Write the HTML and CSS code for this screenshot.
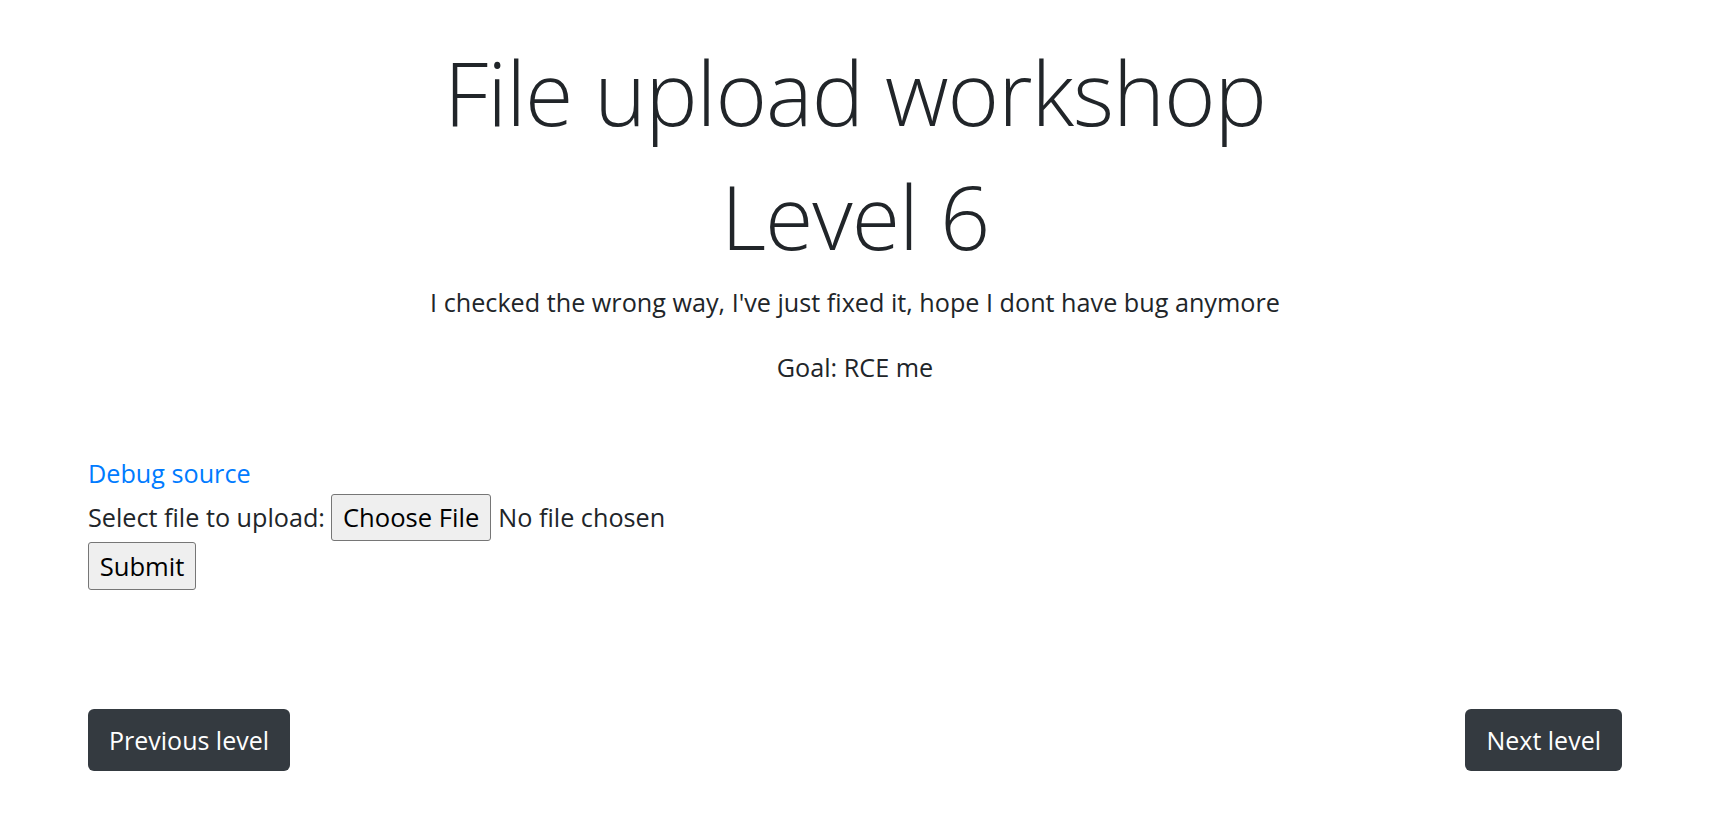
FILE: index.html
```html
<!DOCTYPE html>
<html lang="en">
<head>
<meta charset="utf-8">
<title>File upload workshop - Level 6</title>
<link rel="stylesheet" href="styles.css">
</head>
<body>
<div class="page">
  <header class="hero">
    <h1 class="title">File upload workshop</h1>
    <h1 class="title title-level">Level 6</h1>
    <p class="lead-text">I checked the wrong way, I've just fixed it, hope I dont have bug anymore</p>
    <p class="lead-text">Goal: RCE me</p>
  </header>

  <section class="upload">
    <a class="debug-link" href="#">Debug source</a>
    <form class="upload-form" action="#" method="post" enctype="multipart/form-data">
      <div class="file-row">
        <span class="file-label">Select file to upload:</span>
        <span class="file-button">Choose File</span>
        <span class="file-status">No file chosen</span>
      </div>
      <button class="submit-button" type="button">Submit</button>
    </form>
  </section>

  <nav class="pager">
    <a class="btn-dark" href="#">Previous level</a>
    <a class="btn-dark" href="#">Next level</a>
  </nav>
</div>
</body>
</html>
```

FILE: styles.css
```css
html, body {
  margin: 0;
  padding: 0;
  background: #ffffff;
}

body {
  font-family: "Open Sans", "Noto Sans", sans-serif;
  font-size: 25.2px;
  color: #212529;
}

.page {
  padding: 36px 95px 0 88px;
}

.hero {
  text-align: center;
}

.title {
  margin: 0 0 12px 0;
  font-size: 88px;
  font-weight: 300;
  line-height: 112px;
  letter-spacing: -1px;
}

.title-level {
  margin-bottom: 11px;
}

.lead-text {
  margin: 0 0 27px 0;
  line-height: 38px;
}

.upload {
  margin-top: 68px;
}

.debug-link {
  display: block;
  color: #007bff;
  text-decoration: none;
  line-height: 38px;
}

.upload-form {
  margin: 0;
}

.file-row {
  display: flex;
  align-items: center;
  height: 50px;
}

.file-label {
  margin-right: 6px;
}

.file-button,
.submit-button {
  box-sizing: border-box;
  display: inline-flex;
  align-items: center;
  justify-content: center;
  height: 47px;
  padding: 0 11px;
  font-family: "Open Sans", "Noto Sans", sans-serif;
  font-size: 25.6px;
  color: #000000;
  background: #efefef;
  border: 1px solid #767676;
  border-radius: 3px;
}

.file-status {
  margin-left: 7px;
}

.submit-button {
  display: flex;
  height: 48px;
  width: 108px;
}

.pager {
  display: flex;
  justify-content: space-between;
  margin-top: 119px;
}

.btn-dark {
  box-sizing: border-box;
  display: inline-flex;
  align-items: center;
  height: 62px;
  padding: 0 21px;
  background: #343a40;
  color: #ffffff;
  text-decoration: none;
  font-size: 25px;
  border-radius: 6px;
}
```
